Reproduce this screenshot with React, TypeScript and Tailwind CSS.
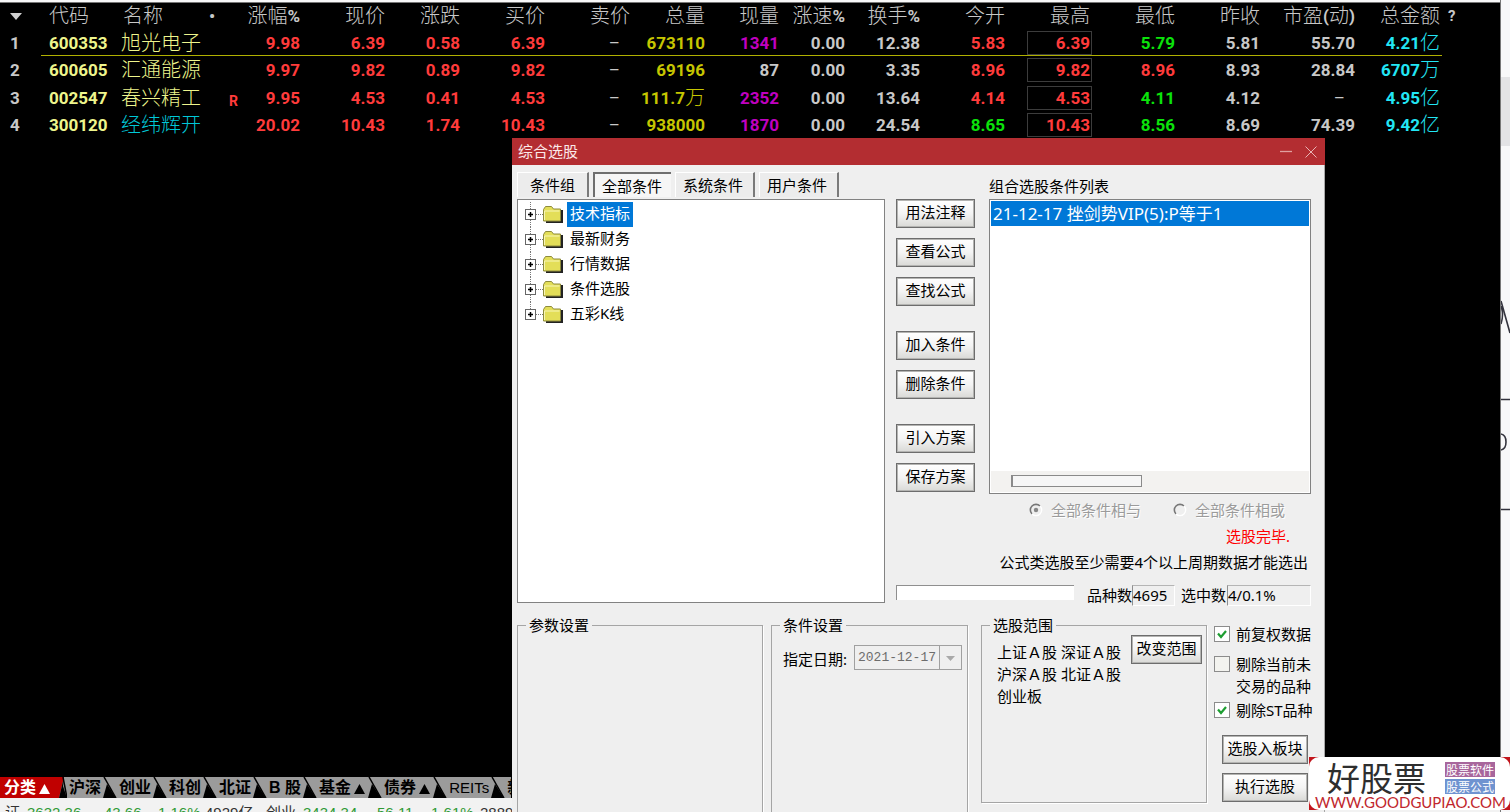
import { Fragment, useState, type ReactNode } from "react";

type Tone = "red" | "green" | "white" | "yellow" | "gold" | "purple" | "cyan" | "aqua";

interface Cell {
  text: string;
  tone: Tone;
}

interface Quote {
  code: string;
  name: string;
  nameTone: Tone;
  mark?: string;
  cells: Cell[];
}

const TONES: Record<Tone, string> = {
  red: "text-[#ff3b3b]",
  green: "text-[#0be30b]",
  white: "text-[#c8c8c8]",
  yellow: "text-[#eef58c]",
  gold: "text-[#c6c600]",
  purple: "text-[#c000c0]",
  cyan: "text-[#00c8d8]",
  aqua: "text-[#22e6f5]",
};

const COLUMNS = [
  { title: "涨幅%", width: "w-[62px]" },
  { title: "现价", width: "w-[85px]" },
  { title: "涨跌", width: "w-[75px]" },
  { title: "买价", width: "w-[85px]" },
  { title: "卖价", width: "w-[85px]" },
  { title: "总量", width: "w-[75px]" },
  { title: "现量", width: "w-[74px]" },
  { title: "涨速%", width: "w-[66px]" },
  { title: "换手%", width: "w-[75px]" },
  { title: "今开", width: "w-[85px]" },
  { title: "最高", width: "w-[85px]" },
  { title: "最低", width: "w-[85px]" },
  { title: "昨收", width: "w-[85px]" },
  { title: "市盈(动)", width: "w-[95px]" },
  { title: "总金额", width: "w-[85px]" },
];

const HIGH_COLUMN = 10;

function c(text: string, tone: Tone): Cell {
  return { text, tone };
}

const QUOTES: Quote[] = [
  {
    code: "600353", name: "旭光电子", nameTone: "yellow",
    cells: [
      c("9.98", "red"), c("6.39", "red"), c("0.58", "red"), c("6.39", "red"), c("–", "white"),
      c("673110", "gold"), c("1341", "purple"), c("0.00", "white"), c("12.38", "white"), c("5.83", "red"),
      c("6.39", "red"), c("5.79", "green"), c("5.81", "white"), c("55.70", "white"), c("4.21亿", "aqua"),
    ],
  },
  {
    code: "600605", name: "汇通能源", nameTone: "yellow",
    cells: [
      c("9.97", "red"), c("9.82", "red"), c("0.89", "red"), c("9.82", "red"), c("–", "white"),
      c("69196", "gold"), c("87", "white"), c("0.00", "white"), c("3.35", "white"), c("8.96", "red"),
      c("9.82", "red"), c("8.96", "red"), c("8.93", "white"), c("28.84", "white"), c("6707万", "aqua"),
    ],
  },
  {
    code: "002547", name: "春兴精工", nameTone: "yellow", mark: "R",
    cells: [
      c("9.95", "red"), c("4.53", "red"), c("0.41", "red"), c("4.53", "red"), c("–", "white"),
      c("111.7万", "gold"), c("2352", "purple"), c("0.00", "white"), c("13.64", "white"), c("4.14", "red"),
      c("4.53", "red"), c("4.11", "green"), c("4.12", "white"), c("–", "white"), c("4.95亿", "aqua"),
    ],
  },
  {
    code: "300120", name: "经纬辉开", nameTone: "cyan",
    cells: [
      c("20.02", "red"), c("10.43", "red"), c("1.74", "red"), c("10.43", "red"), c("–", "white"),
      c("938000", "gold"), c("1870", "purple"), c("0.00", "white"), c("24.54", "white"), c("8.65", "green"),
      c("10.43", "red"), c("8.56", "green"), c("8.69", "white"), c("74.39", "white"), c("9.42亿", "aqua"),
    ],
  },
];

const DIALOG_TABS = ["条件组", "全部条件", "系统条件", "用户条件"];
const TREE = ["技术指标", "最新财务", "行情数据", "条件选股", "五彩K线"];
const ACTIONS = [
  ["用法注释", "查看公式", "查找公式"],
  ["加入条件", "删除条件"],
  ["引入方案", "保存方案"],
];
const MARKET_TABS = ["分类▲", "沪深", "创业", "科创", "北证", "B 股", "基金▲", "债券▲", "REITs", "新三板"];

// Chinese glyphs are drawn larger and thinner than the digits beside them
function Mixed({ text }: { text: string }) {
  return (
    <>
      {text.split(/([\u4e00-\u9fa5]+)/).map((part, i) =>
        i % 2 === 1 ? (
          <span key={i} className="align-[-1px] text-[20px] leading-none font-light">{part}</span>
        ) : (
          <Fragment key={i}>{part}</Fragment>
        )
      )}
    </>
  );
}

function QuoteTable() {
  return (
    <table className="w-full table-fixed border-separate border-spacing-0 whitespace-nowrap font-['Roboto','Noto_Sans_CJK_SC',sans-serif] text-[17px] leading-[22px] font-bold text-[#c8c8c8]">
      <thead>
        <tr className="h-[26px]">
          <th className="w-[41px] p-0 pl-[10px] text-left">
            <svg className="h-[7px] w-3 fill-[#d0d0d0]" viewBox="0 0 12 7"><path d="M0 0h12L6 7z" /></svg>
          </th>
          <th className="w-[76px] p-0 pl-2 text-left"><Mixed text="代码" /></th>
          <th className="w-[88px] p-0 pl-[6px] text-left"><Mixed text="名称" /></th>
          <th className="w-[35px] p-0 pl-1 text-left">•</th>
          {COLUMNS.map(col => (
            <th key={col.title} className={`${col.width} p-0 pr-0.5 text-right`}><Mixed text={col.title} /></th>
          ))}
          <th className="p-0 pl-1.5 text-left text-[15px]">?</th>
        </tr>
      </thead>
      <tbody>
        {QUOTES.map((row, i) => {
          const line = i === 0 ? "shadow-[inset_0_-1px_0_#b0b000]" : "";
          return (
            <tr key={row.code} className="odd:h-[27px] even:h-7">
              <td className="p-0 pl-[10px]">{i + 1}</td>
              <td className={`p-0 pl-2 ${line} ${TONES.yellow}`}>{row.code}</td>
              <td className={`p-0 pl-1 ${line} ${TONES[row.nameTone]}`}><Mixed text={row.name} /></td>
              <td className={`p-0 pr-0.5 text-right align-bottom text-sm ${line} ${TONES.red}`}>{row.mark}</td>
              {row.cells.map((cell, j) => (
                <td key={j} className={`p-0 text-right ${line} ${TONES[cell.tone]}`}>
                  {j === HIGH_COLUMN ? (
                    <span className="ml-auto block h-6 w-[65px] border border-[#3c3c3c] pr-px">{cell.text}</span>
                  ) : (
                    <span className={cell.text === "–" ? "pr-3 font-normal" : "pr-0.5"}><Mixed text={cell.text} /></span>
                  )}
                </td>
              ))}
              <td />
            </tr>
          );
        })}
      </tbody>
    </table>
  );
}

function PushButton({ children, className = "" }: { children: ReactNode; className?: string }) {
  return (
    <button
      type="button"
      className={`h-[29px] shrink-0 border border-[#6d6d6d] bg-linear-to-b from-white via-[#f4f4f4] to-[#d9d9d6] pb-0.5 text-center leading-[25px] whitespace-nowrap shadow-[inset_0_0_0_1px_#b4b4b2] ${className}`}
    >
      {children}
    </button>
  );
}

function FolderIcon() {
  return (
    <svg className="h-[17px] w-5" viewBox="0 0 20 17">
      <path d="M3 16h16V4" fill="none" stroke="#222" strokeWidth="2" />
      <path d="M.5 15V3.5L2.500.5h6l2 2.500h7V15z" fill="#e3de58" stroke="#8d8a3c" />
      <path d="M1.500 14V5h15" fill="none" stroke="#f8f6b8" />
    </svg>
  );
}

function TreeItem({ label, selected, last, onSelect }: { label: string; selected: boolean; last: boolean; onSelect: () => void }) {
  return (
    <li className="flex h-[25px] items-center">
      <svg className="h-[25px] w-[19px]" viewBox="0 0 19 25">
        {!last && <path d="M6.500 18v7" stroke="#777" strokeDasharray="1 1" />}
        <path d="M6.500 0v7M12 12.500h7" stroke="#777" strokeDasharray="1 1" />
        <rect x="1.500" y="7.500" width="10" height="10" fill="#fff" stroke="#666" />
        <path d="M4 12.500h5M6.500 10v5" stroke="#000" strokeWidth="1.500" />
      </svg>
      <FolderIcon />
      <button
        type="button"
        onClick={onSelect}
        className={`ml-1 flex h-[25px] items-start px-[3px] leading-[23px] ${selected ? "bg-[#0078d7] text-white" : ""}`}
      >
        {label}
      </button>
    </li>
  );
}

function Check({ label, defaultChecked = false, className = "" }: { label: ReactNode; defaultChecked?: boolean; className?: string }) {
  return (
    <label className={`flex gap-[6px] leading-[22px] whitespace-nowrap ${className}`}>
      <span className="relative mt-[3px] h-4 w-4 shrink-0">
        <input type="checkbox" defaultChecked={defaultChecked} className="peer block h-4 w-4 appearance-none border border-[#8c8c8c] bg-[#f3f3ef] checked:bg-white" />
        <svg className="pointer-events-none absolute inset-0 hidden h-4 w-4 peer-checked:block" viewBox="0 0 16 16">
          <path d="M4 7.500l3 3.500 5-6" fill="none" stroke="#1e9e32" strokeWidth="2.200" />
        </svg>
      </span>
      <span>{label}</span>
    </label>
  );
}

function Radio({ label, checked }: { label: string; checked: boolean }) {
  return (
    <label className="flex items-center gap-2 text-[#9b9b9b] [text-shadow:1px_1px_0_#fff]">
      <input type="radio" name="combine" disabled defaultChecked={checked} className="peer sr-only" />
      <svg className="h-[14px] w-[14px]" viewBox="0 0 14 14">
        <path d="M3 11A5.600 5.600 0 0 1 11 3" fill="none" stroke="#777" strokeWidth="1.600" />
        <path d="M11 3A5.600 5.600 0 0 1 3 11" fill="none" stroke="#fff" strokeWidth="1.400" />
        {checked && <circle cx="7" cy="7" r="2.200" fill="#888" />}
      </svg>
      {label}
    </label>
  );
}

function Group({ title, className = "", children }: { title: string; className?: string; children?: ReactNode }) {
  return (
    <fieldset className={`min-w-0 border border-[#a5a5a5] shadow-[1px_1px_0_#fff] ${className}`}>
      <legend className="ml-2 px-[3px] leading-5">{title}</legend>
      {children}
    </fieldset>
  );
}

function PickerDialog() {
  const [tab, setTab] = useState(1);
  const [node, setNode] = useState(0);

  return (
    <section
      aria-label="综合选股"
      className="absolute top-[138px] bottom-0 left-[512px] flex w-[813px] flex-col overflow-hidden bg-[#efefef] font-['Noto_Sans','Noto_Sans_CJK_SC',sans-serif] text-[15px] text-black"
    >
      <header className="flex h-[27px] shrink-0 items-center bg-[#b32d31] pr-2 pl-[6px] text-[#fbe9e9]">
        <h1 className="flex-1 leading-[25px]">综合选股</h1>
        <button type="button" aria-label="最小化" className="mr-3">
          <svg className="h-3 w-[14px]" viewBox="0 0 14 12"><path d="M1 5.500h12" stroke="#e0a0a0" strokeWidth="1.300" /></svg>
        </button>
        <button type="button" aria-label="关闭">
          <svg className="h-3 w-3" viewBox="0 0 12 12"><path d="M.5.5l11 11M11.500.5l-11 11" stroke="#e8b4b4" /></svg>
        </button>
      </header>

      <div className="flex shrink-0 border-r border-[#a8a8a8] pr-[13px] pb-[9px] pl-[5px]">
        {/* Tabs + condition tree */}
        <div className="flex min-w-0 flex-1 flex-col pb-[3px]">
          <div className="flex h-[34px] gap-1 pt-[7px] pb-0.5">
            {DIALOG_TABS.map((name, i) => (
              <button
                key={name}
                type="button"
                onClick={() => setTab(i)}
                className={
                  i === tab
                    ? "border-t-2 border-l-2 border-t-[#6f6f6f] border-l-[#6f6f6f] bg-[#f6f6f6] pr-[9px] pl-[7px] leading-[25px]"
                    : "border-t border-r-2 border-l border-t-white border-r-[#7a7a7a] border-l-white bg-[#ececec] pr-[10px] pl-[7px] leading-[25px] first:pl-[12px] first:pr-[12px]"
                }
              >
                {name}
              </button>
            ))}
          </div>
          <ul className="flex-1 border border-[#828282] bg-white px-[6px] pt-0.5">
            {TREE.map((label, i) => (
              <TreeItem key={label} label={label} selected={i === node} last={i === TREE.length - 1} onSelect={() => setNode(i)} />
            ))}
          </ul>
        </div>

        {/* Actions + chosen conditions */}
        <div className="ml-[11px] flex w-[415px] flex-col">
          <div className="flex gap-[14px]">
            <div className="flex w-[79px] flex-col gap-[25px] pt-[34px]">
              {ACTIONS.map(group => (
                <div key={group[0]} className="flex flex-col gap-[10px]">
                  {group.map(name => (
                    <PushButton key={name}>{name}</PushButton>
                  ))}
                </div>
              ))}
            </div>
            <div className="flex min-w-0 flex-1 flex-col">
              <h2 className="h-[34px] pt-[11px] leading-5">组合选股条件列表</h2>
              <div className="flex h-[295px] flex-col border border-[#828282] bg-white p-px">
                <div className="h-[25px] bg-[#0078d7] pl-0.5 text-[17px] leading-[26px] whitespace-nowrap text-white">
                  21-12-17 挫剑势VIP(5):P等于1
                </div>
                <div className="mt-auto h-[21px] bg-[#f3f2f0] pt-1 pl-5">
                  <div className="h-3 w-[131px] border border-l-2 border-[#8a8a8a] bg-[#f6f6f6]" />
                </div>
              </div>
            </div>
          </div>

          <div className="flex h-8 justify-end gap-8 pr-[26px]">
            <Radio label="全部条件相与" checked />
            <Radio label="全部条件相或" checked={false} />
          </div>
          <p className="pr-[21px] text-right leading-[21px] text-[#ff0000]">选股完毕.</p>
          <p className="pr-[3px] text-right leading-[30px] whitespace-nowrap">公式类选股至少需要4个以上周期数据才能选出</p>
          <div className="mt-2 flex h-[21px] leading-[21px] whitespace-nowrap">
            <div className="h-[15px] w-[178px] border-t border-l border-[#8f8f8f] bg-white" />
            <span className="ml-[13px]">品种数</span>
            <output className="w-[43px] border border-t-[#b5b5b5] border-r-white border-b-white border-l-[#8f8f8f] leading-[19px]">4695</output>
            <span className="mr-px ml-[6px]">选中数</span>
            <output className="flex-1 border border-t-[#b5b5b5] border-r-white border-b-white border-l-[#8f8f8f] leading-[19px]">4/0.1%</output>
          </div>
        </div>
      </div>

      {/* Settings */}
      <div className="flex min-h-0 flex-1 border-r border-[#a8a8a8] pl-[5px]">
        <Group title="参数设置" className="mr-2 flex-1 border-b-0" />
        <Group title="条件设置" className="mr-[13px] w-[197px] border-b-0">
          <div className="flex items-center justify-between pt-[9px] pr-[5px] pl-[11px]">
            <label htmlFor="date" className="pt-1 whitespace-nowrap">指定日期:</label>
            <span className="relative w-[108px]">
              <select id="date" disabled className="block h-[25px] w-full appearance-none border border-[#a0a0a0] pl-[3px] font-['Liberation_Mono',monospace] text-[13px] text-[#6d6d6d] opacity-100">
                <option>2021-12-17</option>
              </select>
              <svg className="pointer-events-none absolute inset-y-0 right-0 h-[25px] w-6" viewBox="0 0 24 25">
                <path d="M1.500 1v23" stroke="#a0a0a0" />
                <path d="M8 11h9l-4.500 5z" fill="#a9a9a9" />
              </svg>
            </span>
          </div>
        </Group>
        <Group title="选股范围" className="mr-[7px] mb-[9px] w-[226px]">
          <div className="flex items-start justify-between pr-1 pl-[15px]">
            <p className="pt-[6px] leading-[22px] whitespace-nowrap">
              上证Ａ股 深证Ａ股<br />沪深Ａ股 北证Ａ股<br />创业板
            </p>
            <PushButton className="w-[71px]">改变范围</PushButton>
          </div>
        </Group>
        <div className="flex w-[110px] flex-col pt-2">
          <Check label="前复权数据" defaultChecked />
          <Check className="mt-2" label={<>剔除当前未<br />交易的品种</>} />
          <Check className="mt-0.5" label="剔除ST品种" defaultChecked />
          <PushButton className="mt-[14px] ml-2 w-[86px]">选股入板块</PushButton>
          <PushButton className="mt-[9px] ml-2 w-[86px]">执行选股</PushButton>
        </div>
      </div>
    </section>
  );
}

function MarketTabs() {
  return (
    <nav className="flex h-[21px] w-[511px] overflow-hidden bg-[#9b9b9b] font-['Liberation_Sans','Noto_Sans_CJK_SC',sans-serif] text-base leading-[21px] font-bold whitespace-pre">
      {MARKET_TABS.map((name, i) => (
        <Fragment key={name}>
          <button
            type="button"
            className={
              i === 0
                ? "shrink-0 bg-[#c00000] pr-0.5 pl-1 text-white"
                : name === "REITs"
                  ? "shrink-0 px-0.5 text-[15px] font-normal"
                  : "shrink-0 px-0.5"
            }
          >
            {name.replace("▲", "")}
            {name.endsWith("▲") && (
              <svg className="mr-px ml-[3px] inline-block h-[10px] w-[11px] fill-current" viewBox="0 0 11 10"><path d="M5.500 0L11 10H0z" /></svg>
            )}
          </button>
          <svg className="h-[21px] w-[14px] shrink-0" viewBox="0 0 14 21">
            {i === 0 && <path d="M0 0h11L6 21H0z" fill="#c00000" />}
            <path d={i === 0 ? "M11 0L6 21h8L10 9z" : "M4 7L0 21h13z"} fill="#000" />
            <path d={i === 0 ? "M10 0l4 21" : "M1 0l12 21"} stroke="#000" strokeWidth="1.500" />
          </svg>
        </Fragment>
      ))}
    </nav>
  );
}

function IndexBar() {
  return (
    <footer className="h-[14px] overflow-hidden bg-[#f2f2f2] pt-[6px] font-['Liberation_Sans','Noto_Sans_CJK_SC',sans-serif] text-[15px] leading-[18px] whitespace-nowrap text-[#333]">
      <div className="flex gap-[7px] pl-[5px]">
        <span>证</span>
        <span className="w-[65px] text-[#2f9a35]">3632.36</span>
        <span className="w-[47px] text-[#2f9a35]">-43.66</span>
        <span className="w-[45px] text-[#2f9a35]">-1.16%</span>
        <span className="w-[54px]">4929亿</span>
        <span>创业</span>
        <span className="w-[62px] text-[#2f9a35]">3434.34</span>
        <span className="w-[47px] text-[#2f9a35]">-56.11</span>
        <span className="w-[47px] text-[#2f9a35]">-1.61%</span>
        <span>2889亿</span>
      </div>
    </footer>
  );
}

function SiteBadge() {
  return (
    <a href="#goodgupiao" className="absolute right-0 bottom-0.5 block h-[53px] w-[201px] overflow-hidden bg-[#c1141b] whitespace-nowrap">
      <span className="block h-full rounded-[10px] bg-white pt-[3px] pl-[6px]">
        <span className="flex h-[35px] items-center pl-3">
          <span className="flex-1 font-['Noto_Sans_CJK_SC',sans-serif] text-[33px] leading-[35px] text-[#2e2e2e]">好股票</span>
          <span className="mr-[15px] flex flex-col gap-0.5 font-['Noto_Sans_CJK_SC',sans-serif] text-xs leading-[15px] text-white">
            <span className="bg-[#a8669c] px-px">股票软件</span>
            <span className="bg-[#6f93d0] px-px">股票公式</span>
          </span>
        </span>
        <span className="block font-['Lato',sans-serif] text-[15px] leading-[14px] text-[#c1272d]">WWW.GOODGUPIAO.COM</span>
      </span>
    </a>
  );
}

export default function App() {
  return (
    <div className="relative flex h-screen overflow-hidden bg-[#f8f8f9]">
      <main className="flex min-w-0 flex-1 flex-col border-r border-[#777] pt-0.5">
        <div className="min-h-0 flex-1 border-t border-[#777] bg-black">
          <QuoteTable />
        </div>
        <div className="bg-black">
          <MarketTabs />
        </div>
        <IndexBar />
      </main>

      {/* Sliver of the page behind the window */}
      <aside className="w-[9px] shrink-0">
        <div className="mt-[77px] h-[69px] bg-[#e3e3e5]" />
        <svg className="h-[370px] w-[9px]" viewBox="0 0 9 370" fill="none" stroke="#34343e" strokeWidth="1.600">
          <path d="M0 155l9 32M0 160q3 8 0 18M0 253.500h9M0 288q5 1 5 8t-5 8M0 363.500h9" />
        </svg>
      </aside>

      <PickerDialog />
      <SiteBadge />
    </div>
  );
}
